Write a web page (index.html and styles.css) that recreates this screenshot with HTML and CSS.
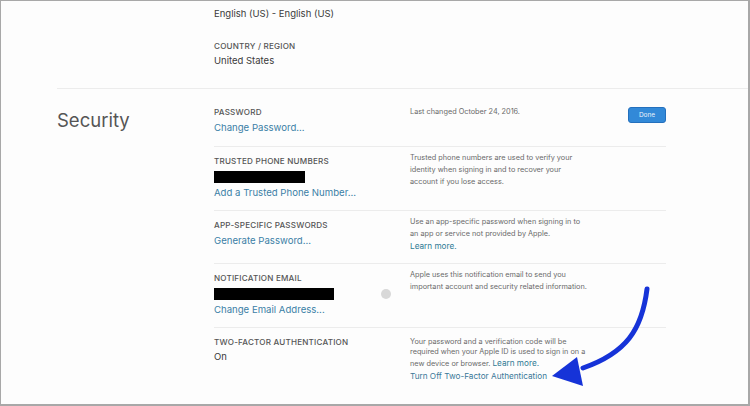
FILE: index.html
```html
<!DOCTYPE html>
<html lang="en">
<head>
  <meta charset="UTF-8" />
  <title>Apple ID - Security</title>
  <link rel="stylesheet" href="styles.css">
</head>
<body>
  <div class="page">
    <div class="top">
      <div class="value">English (US) - English (US)</div>
      <div class="label country">COUNTRY / REGION</div>
      <div class="value">United States</div>
    </div>

    <section class="security">
      <h2>Security</h2>
      <div class="rows">
        <div class="row first">
          <div class="left">
            <div class="label">PASSWORD</div>
            <a class="link">Change Password...</a>
          </div>
          <div class="right">
            <p>Last changed October 24, 2016.</p>
          </div>
          <button class="done">Done</button>
        </div>

        <div class="row">
          <div class="left">
            <div class="label">TRUSTED PHONE NUMBERS</div>
            <div class="redact phone"></div>
            <a class="link">Add a Trusted Phone Number...</a>
          </div>
          <div class="right">
            <p>Trusted phone numbers are used to verify your identity when signing in and to recover your account if you lose access.</p>
          </div>
        </div>

        <div class="row">
          <div class="left">
            <div class="label">APP-SPECIFIC PASSWORDS</div>
            <a class="link">Generate Password...</a>
          </div>
          <div class="right">
            <p>Use an app-specific password when signing in to an app or service not provided by Apple.</p>
            <p class="more"><a class="learn">Learn more.</a></p>
          </div>
        </div>

        <div class="row">
          <div class="left">
            <div class="label">NOTIFICATION EMAIL</div>
            <div class="email-line">
              <div class="redact email"></div>
              <span class="clear"></span>
            </div>
            <a class="link">Change Email Address...</a>
          </div>
          <div class="right">
            <p>Apple uses this notification email to send you important account and security related information.</p>
          </div>
        </div>

        <div class="row last">
          <div class="left">
            <div class="label">TWO-FACTOR AUTHENTICATION</div>
            <div class="value on">On</div>
          </div>
          <div class="right">
            <p class="tight">Your password and a verification code will be required when your Apple ID is used to sign in on a</p>
            <p>new device or browser. <a class="learn">Learn more.</a></p>
            <p class="more"><a class="turnoff">Turn Off Two-Factor Authentication</a></p>
          </div>
        </div>
      </div>
    </section>

    <!-- flecha azul encima del contenido -->
    <svg class="arrow" width="750" height="406" viewBox="0 0 750 406">
      <path d="M647 289 C642 330 626 353 583 368" fill="none" stroke="#1633d8" stroke-width="5" stroke-linecap="round"/>
      <polygon points="552,376 577,357 583,386" fill="#1633d8"/>
    </svg>
  </div>
</body>
</html>
```

FILE: styles.css
```css
* {
  box-sizing: border-box;
}
body {
  margin: 0;
  font-family: Inter, "Liberation Sans", sans-serif;
  background: #fff;
  color: #333;
}
.page {
  position: relative;
  width: 750px;
  height: 406px;
  border: 1px solid #a8a8a8;
  border-right-width: 2px;
  border-bottom-width: 2px;
  overflow: hidden;
  background: #fdfdfd;
}
.top {
  padding: 6px 0 0 213px;
  height: 87px;
}
.value {
  font-size: 9.5px;
  line-height: 14px;
  color: #3a3a3a;
}
.label {
  font-size: 8.1px;
  line-height: 12px;
  font-weight: 500;
  letter-spacing: 0.2px;
  color: #555;
}
.country {
  margin-top: 19px;
  margin-bottom: 2px;
}
.security {
  margin-left: 56px;
  border-top: 1px solid #ececec;
  display: flex;
}
.security h2 {
  margin: 0;
  padding-top: 19px;
  width: 157px;
  font-size: 18.5px;
  font-weight: 400;
  line-height: 24px;
  color: #555;
}
.rows {
  width: 452px;
  padding-top: 9px;
}
.row {
  display: flex;
  border-bottom: 1px solid #ececec;
  padding: 8px 0 10px;
  position: relative;
}
.row.first {
  padding-bottom: 11px;
}
.row.first .right,
.row.last .right {
  margin-top: 0;
}
.row.last {
  border-bottom: none;
}
.left {
  width: 196px;
  display: flex;
  flex-direction: column;
  align-items: flex-start;
}
.right {
  width: 180px;
  margin-top: -3px;
}
.right p {
  margin: 0;
  font-size: 7.3px;
  line-height: 12px;
  color: #6a6a6a;
}
.right p.tight {
  line-height: 10px;
  margin-top: 1px;
}
.right p.more {
  line-height: 12px;
}
.link {
  font-size: 9.6px;
  line-height: 14px;
  color: #3b7fa6;
  margin-top: 3px;
}
.learn {
  font-size: 8.2px;
  color: #2f7a94;
}
.turnoff {
  font-size: 8.2px;
  color: #3a7898;
}
.redact {
  background: #000;
  height: 12px;
  margin-top: 4px;
}
.phone {
  width: 91px;
}
.email-line {
  display: flex;
  align-items: center;
}
.email {
  width: 120px;
}
.clear {
  width: 10px;
  height: 10px;
  border-radius: 50%;
  background: #d8d8d8;
  margin: 4px 0 0 47px;
}
.on {
  margin-top: 2px;
}
.done {
  position: absolute;
  right: 0;
  top: 9px;
  width: 38px;
  height: 16px;
  padding: 0;
  border: 1px solid #2470bd;
  border-radius: 3px;
  background: #3289d8;
  color: #e8f1fb;
  font-family: inherit;
  font-size: 6.5px;
}
.arrow {
  position: absolute;
  left: -1px;
  top: -1px;
}
```
